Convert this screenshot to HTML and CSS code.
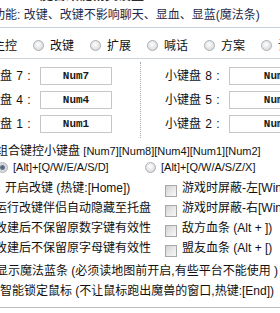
FILE: index.html
```html
<!DOCTYPE html>
<html lang="zh-CN">
<head>
<meta charset="utf-8">
<link rel="stylesheet" href="styles.css">
</head>
<body>
<div class="page">
  <div class="title">魔兽改键精灵设置</div>
  <div class="intro">功能: 改键、改键不影响聊天、显血、显蓝(魔法条)</div>
  <div class="rule rule-top"></div>
  <div class="tabs">
    <span class="tab">主控</span>
    <span class="tab"><i class="radio"></i>改键</span>
    <span class="tab"><i class="radio"></i>扩展</span>
    <span class="tab"><i class="radio"></i>喊话</span>
    <span class="tab"><i class="radio"></i>方案</span>
    <span class="tab"><i class="radio"></i>设置</span>
  </div>
  <div class="rule rule-mid"></div>
  <div class="keys">
    <span class="kl">小键盘 7 :</span><span class="ki">Num7</span>
    <span class="divider"></span>
    <span class="kl r">小键盘 8 :</span><span class="ki r">Num8</span>
    <span class="kl">小键盘 4 :</span><span class="ki">Num4</span>
    <span class="kl r">小键盘 5 :</span><span class="ki r">Num5</span>
    <span class="kl">小键盘 1 :</span><span class="ki">Num1</span>
    <span class="kl r">小键盘 2 :</span><span class="ki r">Num2</span>
  </div>
  <div class="combo">组合键控小键盘 <span class="en">[Num7][Num8][Num4][Num1][Num2]</span></div>
  <div class="modes">
    <span class="mode"><i class="radio on"></i><span class="en">[Alt]+[Q/W/E/A/S/D]</span></span>
    <span class="mode"><i class="radio"></i><span class="en">[Alt]+[Q/W/A/S/Z/X]</span></span>
  </div>
  <div class="checks">
    <span class="opt first"><i class="check"></i>开启改键 (热键:[Home])</span>
    <span class="opt"><i class="check"></i>游戏时屏蔽-左[Win键]</span>
    <span class="opt"><i class="check"></i>运行改键伴侣自动隐藏至托盘</span>
    <span class="opt"><i class="check"></i>游戏时屏蔽-右[Win键]</span>
    <span class="opt"><i class="check"></i>改建后不保留原数字键有效性</span>
    <span class="opt"><i class="check"></i>敌方血条 (Alt + ])</span>
    <span class="opt"><i class="check"></i>改建后不保留原字母键有效性</span>
    <span class="opt"><i class="check"></i>盟友血条 (Alt + [)</span>
  </div>
  <div class="extras">
    <span class="opt"><i class="check"></i>显示魔法蓝条 (必须读地图前开启,有些平台不能使用 )</span>
    <span class="opt lock"><i class="check"></i>智能锁定鼠标 (不让鼠标跑出魔兽的窗口,热键:[End])</span>
  </div>
  <div class="rule rule-bottom"></div>
</div>
</body>
</html>
```

FILE: styles.css
```css
html, body {
  margin: 0;
  padding: 0;
  background: #ffffff;
}
body {
  width: 280px;
  height: 313px;
  overflow: hidden;
  font-family: "Liberation Sans", "Noto Sans CJK SC", sans-serif;
  font-size: 12px;
  color: #111111;
}
.page {
  margin-left: -30px;
  width: 360px;
}
.title {
  font-weight: bold;
  font-size: 13px;
  line-height: 16px;
  margin-top: -13px;
  margin-bottom: 2px;
  padding-left: 70px;
  color: #2a2a2a;
  white-space: nowrap;
}
.intro {
  line-height: 20px;
  padding-left: 23px;
  color: #1f2b4c;
  white-space: nowrap;
}
.rule {
  height: 1px;
  background: #c7d2dd;
}
.rule-top {
  margin-top: 2px;
}
.rule-mid {
  margin-top: 4px;
  background: #cbd3db;
}
.rule-bottom {
  margin-top: 6px;
  background: #bcbcbc;
}
.tabs {
  display: flex;
  align-items: center;
  gap: 16px;
  height: 20px;
  margin-top: 6px;
  padding-left: 23px;
  white-space: nowrap;
}
.tab {
  display: flex;
  align-items: center;
  gap: 6px;
}
.radio {
  display: block;
  flex: none;
  width: 11px;
  height: 11px;
  box-sizing: border-box;
  border-radius: 50%;
  border: 1px solid #a9b0b8;
  background: radial-gradient(circle at 45% 40%, #ffffff 0, #eeeeee 35%, #cfcfcf 100%);
}
.tab .radio {
  margin-top: 2px;
}
.radio.on {
  background: radial-gradient(circle at 50% 50%, #45566a 0, #6a7c90 2px, #d6d6d6 3px, #ececec 100%);
}
.keys {
  display: grid;
  grid-template-columns: 64px 72px 28px 1px 24px 64px 96px;
  grid-auto-rows: 18px;
  row-gap: 6px;
  margin-top: 8px;
  padding-left: 6px;
}
.kl {
  grid-column: 1;
  line-height: 18px;
  word-spacing: 1px;
  white-space: nowrap;
}
.ki {
  grid-column: 2;
  box-sizing: border-box;
  border: 1px solid #c6c6c6;
  display: flex;
  align-items: center;
  justify-content: center;
  font-family: "Liberation Mono", monospace;
  font-weight: bold;
  font-size: 11px;
  color: #1a1a1a;
}
.kl.r {
  grid-column: 6;
}
.ki.r {
  grid-column: 7;
}
.divider {
  grid-column: 4;
  grid-row: 1 / 4;
  margin: -5px 0;
  border-left: 1px dotted #a8a8a8;
}
.en {
  font-size: 11px;
}
.combo {
  margin-top: 10px;
  line-height: 16px;
  padding-left: 26px;
  white-space: nowrap;
}
.modes {
  display: flex;
  align-items: center;
  height: 16px;
  padding-left: 27px;
  white-space: nowrap;
}
.mode {
  display: flex;
  align-items: center;
  gap: 5px;
  width: 148px;
  flex: none;
}
.checks {
  display: grid;
  grid-template-columns: 187px auto;
  grid-auto-rows: 20px;
  margin-top: 3px;
  padding-left: 8px;
}
.opt {
  display: flex;
  align-items: flex-start;
  gap: 5px;
  line-height: 20px;
  white-space: nowrap;
}
.check {
  display: block;
  flex: none;
  width: 12px;
  height: 12px;
  margin-top: 7px;
  box-sizing: border-box;
  border: 1px solid #a7a7a7;
  background: linear-gradient(135deg, #d2d2d2 0%, #e9e9e9 55%, #f7f7f7 100%);
}
.opt.first {
  padding-left: 10px;
}
.extras {
  display: flex;
  flex-direction: column;
  margin-top: 3px;
  padding-left: 9px;
}
.opt.lock {
  padding-left: 4px;
}
```
